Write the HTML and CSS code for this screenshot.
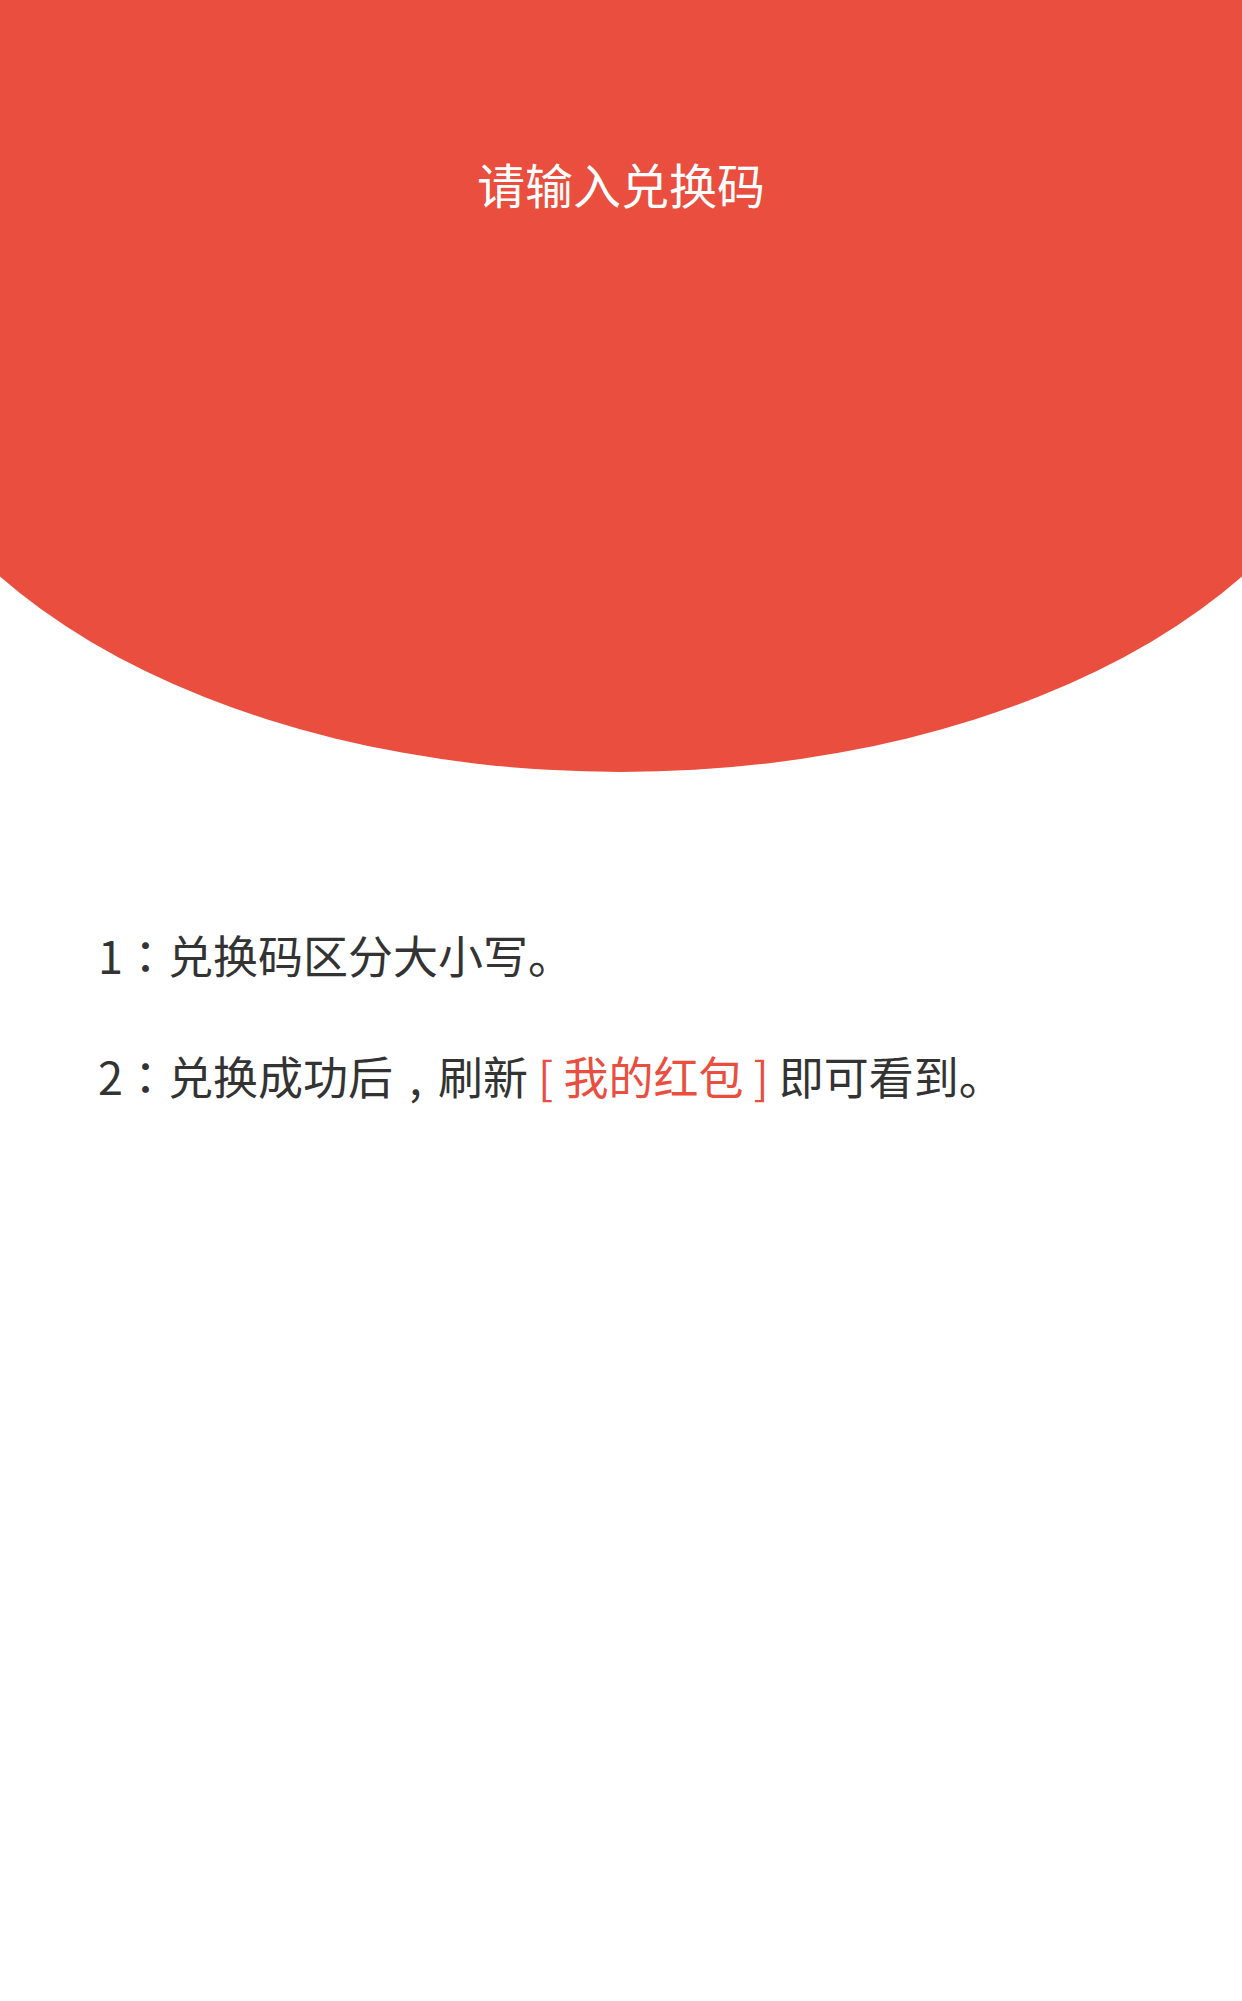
FILE: index.html
```html
<!DOCTYPE html>
<html lang="zh-CN">
<head>
<meta charset="utf-8">
<title>兑换码</title>
<link rel="stylesheet" href="styles.css">
</head>
<body>
<header class="hero">
  <div class="arc">
    <h1 class="title">请输入兑换码</h1>
  </div>
</header>
<section class="notes">
  <p class="note">1<span class="punct" lang="zh-TW">：</span>兑换码区分大小写。</p>
  <p class="note">2<span class="punct" lang="zh-TW">：</span>兑换成功后<span class="comma">,</span>刷新 <span class="hl">[ 我的红包 ]</span> 即可看到。</p>
</section>
</body>
</html>
```
FILE: styles.css
```css
html, body {
  margin: 0;
  padding: 0;
  background: #ffffff;
}
body {
  width: 1242px;
  font-family: "Noto Sans CJK SC", "Noto Sans", sans-serif;
  overflow-x: hidden;
}
.hero {
  height: 772px;
  overflow: hidden;
}
.arc {
  margin: 0 -129px;
  height: 772px;
  background: #e94e3e;
  border-radius: 0 0 750px 750px / 0 0 445px 445px;
  padding-top: 153px;
  box-sizing: border-box;
}
.title {
  margin: 0;
  text-align: center;
  color: #ffffff;
  font-size: 48px;
  line-height: 60px;
  font-weight: 400;
}
.notes {
  padding: 153px 0 0 98px;
}
.note {
  margin: 0 0 61px 0;
  font-size: 45px;
  line-height: 60px;
  color: #333333;
}
.punct {
  font-family: "Noto Sans CJK TC", "Noto Sans CJK SC", sans-serif;
}
.comma {
  display: inline-block;
  width: 1em;
  text-align: center;
}
.hl {
  color: #e94e3e;
}
```
